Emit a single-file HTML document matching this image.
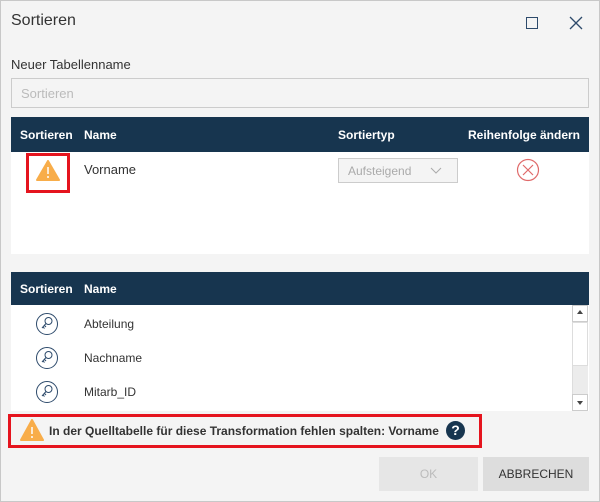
<!DOCTYPE html>
<html><head><meta charset="utf-8"><style>
*{box-sizing:border-box;margin:0;padding:0}
body{width:600px;height:502px;background:#f4f4f4;font-family:"Liberation Sans",sans-serif;position:relative;overflow:hidden;color:#333}
.a{position:absolute}
.hd{background:#17354f;color:#fff;font-weight:bold;font-size:12px}
.t{font-size:13px;color:#333}
</style></head><body>
<div class="a" style="left:0;top:0;width:600px;height:502px;border:1px solid #c8c8c8"></div>
<div class="a" style="left:11px;top:12px;font-size:16px;color:#333">Sortieren</div>
<div class="a" style="left:526px;top:17px;width:12px;height:12px;border:1.5px solid #2d4a6b"></div>
<svg class="a" style="left:569px;top:16px" width="14" height="14"><path d="M1 1L13 13M13 1L1 13" stroke="#2d4a6b" stroke-width="1.3"/></svg>
<div class="a t" style="left:11px;top:57px;font-size:13px">Neuer Tabellenname</div>
<div class="a" style="left:11px;top:78px;width:578px;height:30px;border:1px solid #ccc;background:#f4f4f4;color:#bbb;font-size:13px;padding:7px 9px">Sortieren</div>

<div class="a hd" style="left:11px;top:117px;width:578px;height:35px"></div>
<div class="a hd" style="left:20px;top:128px">Sortieren</div>
<div class="a hd" style="left:84px;top:128px">Name</div>
<div class="a hd" style="left:338px;top:128px">Sortiertyp</div>
<div class="a hd" style="left:468px;top:128px">Reihenfolge ändern</div>
<div class="a" style="left:11px;top:152px;width:578px;height:102px;background:#fff"></div>
<div class="a" style="left:26px;top:153px;width:44px;height:40px;border:3px solid #e5141e"></div>
<svg class="a" style="left:36px;top:160px" width="24" height="21"><path d="M12 1L23 20H1Z" fill="#f8ad4a" stroke="#f8ad4a" stroke-linejoin="round" stroke-width="2"/><path d="M12 7V14" stroke="#fff" stroke-width="1.5"/><circle cx="12" cy="17" r="1" fill="#fff"/></svg>
<div class="a t" style="left:84px;top:162px">Vorname</div>
<div class="a" style="left:338px;top:158px;width:120px;height:25px;border:1px solid #ccc;background:#f4f4f4;color:#aaa;font-size:12px;padding:5px 9px">Aufsteigend</div>
<svg class="a" style="left:430px;top:167px" width="12" height="8"><path d="M1 1L6 6L11 1" stroke="#aaa" fill="none"/></svg>
<svg class="a" style="left:516px;top:158px" width="24" height="24"><circle cx="12" cy="12" r="10.5" fill="none" stroke="#e06a6a" stroke-width="1.2"/><path d="M7 7L17 17M17 7L7 17" stroke="#e06a6a" stroke-width="1.2"/></svg>

<div class="a hd" style="left:11px;top:272px;width:578px;height:33px"></div>
<div class="a hd" style="left:20px;top:282px">Sortieren</div>
<div class="a hd" style="left:84px;top:282px">Name</div>
<div class="a" style="left:11px;top:305px;width:578px;height:106px;background:#fff"></div>
<div class="a" style="left:572px;top:305px;width:16px;height:106px;background:#ececec;border-left:1px solid #ddd"></div>
<div class="a" style="left:572px;top:305px;width:16px;height:17px;background:#fff;border:1px solid #ccc"></div>
<div class="a" style="left:572px;top:322px;width:16px;height:44px;background:#fff;border:1px solid #ddd"></div>
<div class="a" style="left:572px;top:394px;width:16px;height:17px;background:#fff;border:1px solid #ccc"></div>
<div class="a" style="left:577px;top:310px;border:3px solid transparent;border-bottom:4px solid #444;border-top:0"></div>
<div class="a" style="left:577px;top:401px;border:3px solid transparent;border-top:4px solid #444;border-bottom:0"></div>
<svg class="a" style="left:35px;top:312px" width="24" height="120">
<g fill="none" stroke="#2d4a6b" stroke-width="1"><circle cx="12" cy="12" r="10.5"/><circle cx="13.5" cy="9" r="3.5"/><path d="M11 11.5L7 16M8 15l1.5 1.5M9.5 13.5l1.5 1.5"/>
<g transform="translate(0,34)"><circle cx="12" cy="12" r="10.5"/><circle cx="13.5" cy="9" r="3.5"/><path d="M11 11.5L7 16M8 15l1.5 1.5M9.5 13.5l1.5 1.5"/></g>
<g transform="translate(0,68)"><circle cx="12" cy="12" r="10.5"/><circle cx="13.5" cy="9" r="3.5"/><path d="M11 11.5L7 16M8 15l1.5 1.5M9.5 13.5l1.5 1.5"/></g></g></svg>
<div class="a t" style="left:84px;top:317px;font-size:12px">Abteilung</div>
<div class="a t" style="left:84px;top:351px;font-size:12px">Nachname</div>
<div class="a t" style="left:84px;top:385px;font-size:12px">Mitarb_ID</div>

<div class="a" style="left:8px;top:414px;width:474px;height:34px;border:3px solid #e5141e"></div>
<svg class="a" style="left:20px;top:419px" width="24" height="22"><path d="M12 1L23 21H1Z" fill="#f8ad4a" stroke="#f8ad4a" stroke-linejoin="round" stroke-width="2"/><path d="M12 8V15" stroke="#fff" stroke-width="1.5"/><circle cx="12" cy="18" r="1" fill="#fff"/></svg>
<div class="a" style="left:49px;top:424px;font-size:12px;font-weight:bold;color:#333">In der Quelltabelle für diese Transformation fehlen spalten: Vorname</div>
<div class="a" style="left:446px;top:421px;width:19px;height:19px;border-radius:50%;background:#17354f;color:#fff;font-weight:bold;font-size:14px;text-align:center;line-height:19px">?</div>

<div class="a" style="left:379px;top:457px;width:99px;height:34px;background:#e6e6e6;color:#bbb;font-size:12px;text-align:center;line-height:34px">OK</div>
<div class="a" style="left:483px;top:457px;width:106px;height:34px;background:#ddd;color:#333;font-size:12px;text-align:center;line-height:34px">ABBRECHEN</div>
</body></html>
